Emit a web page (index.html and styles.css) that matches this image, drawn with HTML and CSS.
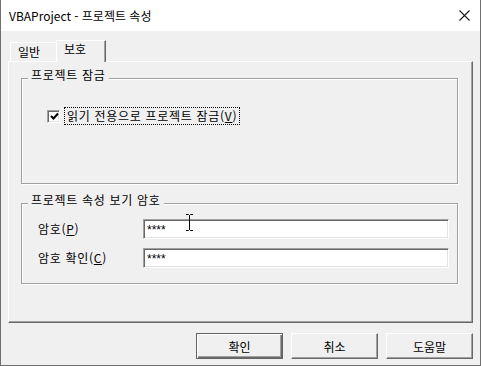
FILE: index.html
```html
<!DOCTYPE html>
<html lang="ko">
<head>
  <meta charset="UTF-8" />
  <title>VBAProject - 프로젝트 속성</title>
  <link rel="stylesheet" href="styles.css">
</head>
<body>

<div class="window">
  <div class="titlebar">
    <span class="title">VBAProject - 프로젝트 속성</span>
    <svg class="close" width="11" height="11" viewBox="0 0 11 11">
      <path d="M0.5 0.5 L10.5 10.5 M10.5 0.5 L0.5 10.5" stroke="#1a1a1a" stroke-width="1.1" fill="none"/>
    </svg>
  </div>

  <div class="client">
    <div class="tabs">
      <div class="tab">일반</div>
      <div class="tab active">보호</div>
    </div>

    <div class="panel">
      <fieldset class="group lock">
        <legend>프로젝트 잠금</legend>
        <label class="check">
          <span class="box">
            <svg width="9" height="9" viewBox="0 0 9 9">
              <path d="M1 4 L3.5 6.5 L8 1.5" stroke="#000" stroke-width="2" fill="none"/>
            </svg>
          </span>
          <span class="focus">읽기 전용으로 프로젝트 잠금(<u>V</u>)</span>
        </label>
      </fieldset>

      <fieldset class="group password">
        <legend>프로젝트 속성 보기 암호</legend>
        <div class="rows">
          <div class="row">
            <span class="caption">암호(<u>P</u>)</span>
            <div class="field">****</div>
          </div>
          <div class="row">
            <span class="caption">암호 확인(<u>C</u>)</span>
            <div class="field">****</div>
          </div>
        </div>
      </fieldset>
    </div>

    <div class="buttons">
      <button type="button" class="default">확인</button>
      <button type="button">취소</button>
      <button type="button">도움말</button>
    </div>
  </div>

  <!-- mouse cursor over the first field -->
  <svg class="ibeam" width="9" height="17" viewBox="0 0 9 17">
    <path d="M1 0.5 H3.5 L4.5 1.5 L5.5 0.5 H8 M4.5 1.5 V15.5 M1 16.5 H3.5 L4.5 15.5 L5.5 16.5 H8" stroke="#000" stroke-width="1" fill="none"/>
  </svg>
</div>

</body>
</html>
```

FILE: styles.css
```css
body {
  margin: 0;
  font-family: "Noto Sans CJK KR", "Noto Sans", sans-serif;
  font-size: 12px;
  color: #000;
  background: #f0f0f0;
}
.window {
  position: relative;
  width: 481px;
  height: 366px;
  box-sizing: border-box;
  border: 1px solid #707070;
  border-top: none;
  background: #f0f0f0;
}
.titlebar {
  height: 31px;
  background: #fff;
  display: flex;
  align-items: center;
  justify-content: space-between;
  padding: 0 10px 0 8px;
}
.title {
  font-size: 12px;
  line-height: 16px;
  color: #000;
}
.close {
  display: block;
}
.client {
  padding: 9px 7px 0 7px;
}
.tabs {
  display: flex;
  align-items: flex-end;
  padding-left: 2px;
}
.tab {
  box-sizing: border-box;
  height: 19px;
  width: 47px;
  padding-left: 7px;
  line-height: 17px;
  border-top: 1px solid #fff;
  border-left: 1px solid #fff;
  border-right: 1px solid #a0a0a0;
}
.tab.active {
  position: relative;
  z-index: 1;
  height: 22px;
  width: 50px;
  margin-bottom: -1px;
  margin-left: -1px;
  padding-left: 7px;
  line-height: 16px;
  background: #f0f0f0;
  border-right: 1px solid #696969;
  box-shadow: inset -1px 0 0 #a0a0a0;
}
.panel {
  box-sizing: border-box;
  height: 262px;
  border: 1px solid;
  border-color: #fff #696969 #696969 #fff;
  box-shadow: inset -1px -1px 0 #a0a0a0;
  padding: 6px 14px 0 12px;
  letter-spacing: 0.7px;
}
.group {
  margin: 0;
  padding: 0;
  border: 1px solid #a0a0a0;
  box-shadow: inset 1px 1px 0 #fff, 1px 1px 0 #fff;
  min-width: 0;
}
.group legend {
  margin-left: 6px;
  padding: 0 3px 6px 3px;
  line-height: 14px;
  background: #f0f0f0;
}
.lock {
  height: 114px;
}
.check {
  display: flex;
  align-items: center;
  margin: 19px 0 0 25px;
}
.box {
  box-sizing: border-box;
  width: 13px;
  height: 13px;
  border: 1px solid;
  border-color: #a0a0a0 #fff #fff #a0a0a0;
  box-shadow: inset 1px 1px 0 #696969, inset -1px -1px 0 #e3e3e3;
  background: #fff;
  display: flex;
  align-items: center;
  justify-content: center;
  padding: 1px 0 0 1px;
}
.box svg {
  display: block;
}
.focus {
  margin-left: 4px;
  padding: 0 2px;
  line-height: 16px;
  border: 1px dotted #000;
}
.password {
  margin-top: 9px;
}
.rows {
  padding: 6px 8px 15px 16px;
}
.row {
  display: flex;
  align-items: center;
}
.row + .row {
  margin-top: 9px;
}
.caption {
  width: 105px;
  line-height: 16px;
}
.field {
  flex: 1;
  box-sizing: border-box;
  height: 20px;
  padding: 0 3px;
  border: 1px solid;
  border-color: #a0a0a0 #fff #fff #a0a0a0;
  box-shadow: inset 1px 1px 0 #696969, inset -1px -1px 0 #e3e3e3;
  background: #fff;
  font-family: "Liberation Sans", sans-serif;
  font-size: 12px;
  line-height: 20px;
  letter-spacing: 0;
}
.buttons {
  display: flex;
  justify-content: flex-end;
  gap: 8px;
  margin-top: 10px;
}
button {
  box-sizing: border-box;
  width: 87px;
  height: 26px;
  padding: 0;
  background: #f0f0f0;
  font-family: "Noto Sans CJK KR", sans-serif;
  font-size: 12px;
  color: #000;
  border: 1px solid;
  border-color: #fff #696969 #696969 #fff;
  box-shadow: inset -1px -1px 0 #a0a0a0;
}
button.default {
  border: 1px solid #646464;
  box-shadow: inset 1px 1px 0 #fff, inset -1px -1px 0 #696969, inset -2px -2px 0 #a0a0a0;
}
.ibeam {
  position: absolute;
  left: 184px;
  top: 214px;
}
```
